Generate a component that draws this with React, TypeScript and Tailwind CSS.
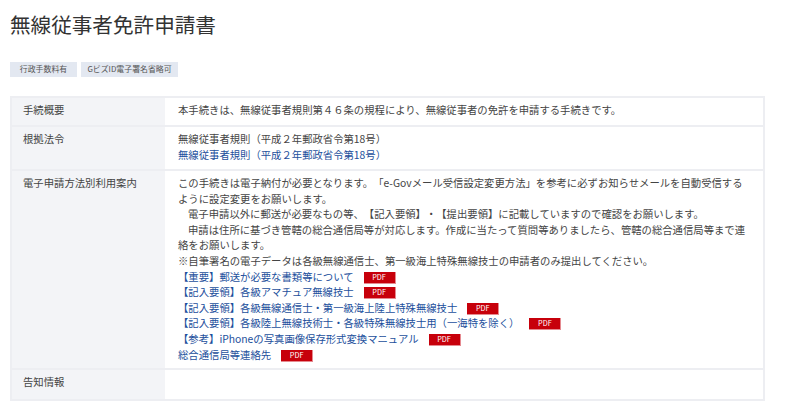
const font = { fontFamily: '"Noto Sans CJK JP", "Noto Sans", sans-serif' };

function Pdf() {
  return (
    <span className="ml-[10px] inline-block h-[12px] w-[32px] bg-[#c7000b] border-b border-r border-[#e58a90] text-center align-top mt-[3px] text-[7.3px] leading-[10px] text-white">
      PDF
    </span>
  );
}

function Row({
  label,
  children,
  className,
}: {
  label: string;
  children?: React.ReactNode;
  className?: string;
}) {
  return (
    <div className={`flex border-b-2 border-[#edeef2] last:border-b-0 ${className ?? ''}`}>
      <div className="w-[153px] shrink-0 bg-[#f3f4f7] pl-[11px] pt-[4px] text-[#444444]">{label}</div>
      <div className="flex-1 pl-[13px] pr-[16px] pt-[4px] text-[#444444]">{children}</div>
    </div>
  );
}

const linkClass = 'h-[15.6px] whitespace-nowrap text-[#1c4f9c]';

export default function App() {
  return (
    <div className="h-[405px] w-[800px] overflow-hidden bg-white pl-[10px] [text-spacing-trim:space-all]" style={font}>
      <h1 className="pt-[9px] text-[20.6px] leading-[30px] font-normal text-[#333333]">無線従事者免許申請書</h1>
      <div className="mt-[23px] flex gap-[4px]">
        <span className="h-[15px] w-[67px] bg-[#e3e8f1] text-center text-[7.9px] leading-[14px] text-[#555555]">行政手数料有</span>
        <span className="h-[15px] w-[97px] bg-[#e3e8f1] text-center text-[7.9px] leading-[14px] text-[#555555]">GビズID電子署名省略可</span>
      </div>
      <div className="mt-[19px] w-[755px] border-2 border-[#edeef2] text-[10.35px] leading-[15.6px]">
        <Row label="手続概要" className="h-[29px]">
          本手続きは、無線従事者規則第４６条の規程により、無線従事者の免許を申請する手続きです。
        </Row>
        <Row label="根拠法令" className="h-[44px]">
          <div>無線従事者規則（平成２年郵政省令第18号）</div>
          <div className={linkClass}>無線従事者規則（平成２年郵政省令第18号）</div>
        </Row>
        <Row label="電子申請方法別利用案内" className="h-[199px]">
          <div>この手続きは電子納付が必要となります。「e-Govメール受信設定変更方法」を参考に必ずお知らせメールを自動受信するように設定変更をお願いします。</div>
          <div className="pl-[10px]">電子申請以外に郵送が必要なもの等、【記入要領】・【提出要領】に記載していますので確認をお願いします。</div>
          <div className="indent-[10px]">申請は住所に基づき管轄の総合通信局等が対応します。作成に当たって質問等ありましたら、管轄の総合通信局等まで連絡をお願いします。</div>
          <div>※自筆署名の電子データは各級無線通信士、第一級海上特殊無線技士の申請者のみ提出してください。</div>
          <div className={linkClass}>【重要】郵送が必要な書類等について<Pdf /></div>
          <div className={linkClass}>【記入要領】各級アマチュア無線技士<Pdf /></div>
          <div className={linkClass}>【記入要領】各級無線通信士・第一級海上陸上特殊無線技士<Pdf /></div>
          <div className={linkClass}>【記入要領】各級陸上無線技術士・各級特殊無線技士用（一海特を除く）<Pdf /></div>
          <div className={linkClass}>【参考】iPhoneの写真画像保存形式変換マニュアル<Pdf /></div>
          <div className={linkClass}>総合通信局等連絡先<Pdf /></div>
        </Row>
        <Row label="告知情報" className="h-[29px]" />
      </div>
    </div>
  );
}
